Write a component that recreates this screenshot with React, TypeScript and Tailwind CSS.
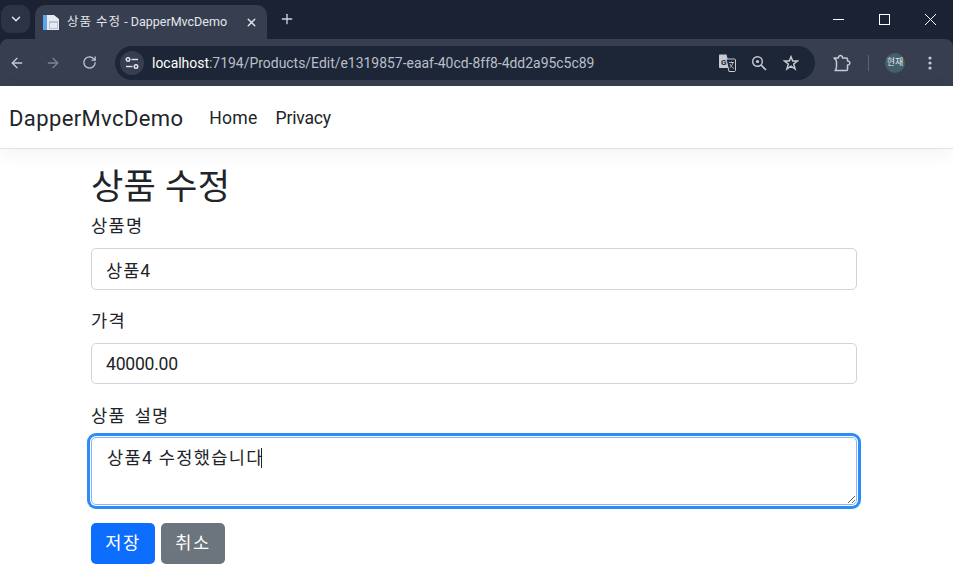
import React from 'react';
import { ArrowLeft, ArrowRight, RotateCw, ChevronDown, X, Plus } from 'lucide-react';

const font = { fontFamily: 'Roboto, "Noto Sans CJK KR", sans-serif' };

const Field = ({ label, value, className, inputClassName }: { label: string; value: string; className: string; inputClassName: string }) => (
  <div className={className}>
    <label className="block h-[26px] text-[17.6px] leading-[26px] tracking-[1.3px] text-[#212529] mb-[9px]">{label}</label>
    <input
      readOnly
      value={value}
      className={`block w-full px-[14px] text-[17.6px] text-[#212529] bg-white border border-[#ced4da] rounded-[5px] outline-none ${inputClassName}`}
    />
  </div>
);

const SiteInfoIcon = () => (
  <svg width="14" height="14" viewBox="0 0 14 14" fill="none" stroke="#e3e6ec" strokeWidth="1.4">
    <circle cx="3" cy="3.5" r="1.8" />
    <path d="M6.5 3.5H13" />
    <circle cx="11" cy="10.5" r="1.8" />
    <path d="M1 10.5H7.5" />
  </svg>
);

const TranslateIcon = () => (
  <svg width="18" height="18" viewBox="0 0 18 18">
    <path d="M1 1.5C1 .9 1.4.5 2 .5H8.5L12 14H2C1.4 14 1 13.6 1 13Z" fill="#c5cad3" />
    <path d="M8 5H16.5C17 5 17.5 5.4 17.5 6V16.5C17.5 17 17 17.5 16.5 17.5H11L8 5Z" fill="#1d2636" stroke="#c5cad3" strokeWidth="1" />
    <text x="3" y="11" fontSize="8" fontWeight="700" fill="#1d2636" fontFamily="Roboto, sans-serif">G</text>
    <path d="M11 8.5H16M13.5 7.5V8.5M15 8.5C14.5 11 13 13 11.5 14M12 10C12.5 11.5 14 13.5 16 14.5" stroke="#c5cad3" strokeWidth="0.9" fill="none" />
  </svg>
);

const ZoomIcon = () => (
  <svg width="16" height="16" viewBox="0 0 16 16" fill="none" stroke="#c5cad3" strokeWidth="1.4">
    <circle cx="6.5" cy="6.5" r="4.8" />
    <circle cx="6.5" cy="6.5" r="1.6" fill="#c5cad3" stroke="none" />
    <path d="M10 10L15 15" strokeWidth="1.7" />
  </svg>
);

const StarIcon = () => (
  <svg width="16" height="16" viewBox="0 0 16 16" fill="none" stroke="#c5cad3" strokeWidth="1.5" strokeLinejoin="miter">
    <path d="M8 1.8L9.7 6H14.6L10.7 9L12.1 14L8 11.2L3.9 14L5.3 9L1.4 6H6.3Z" />
  </svg>
);

const ExtensionIcon = () => (
  <svg width="18" height="18" viewBox="0 0 18 18" fill="none" stroke="#c5cad3" strokeWidth="1.5" strokeLinejoin="round">
    <path d="M1 4H5.5C5 .8 10 .8 9.5 4H13.5C14.1 4 14.5 4.4 14.5 5V7C17.6 6.6 17.6 11.4 14.5 11V15.5C14.5 16.1 14.1 16.5 13.5 16.5H2C3.2 15.6 3.5 14.5 3.5 13V7.5C3.5 6 2.6 5 1 4Z" />
  </svg>
);

const KebabIcon = () => (
  <svg width="4" height="14" viewBox="0 0 4 14" fill="#c5cad3">
    <circle cx="2" cy="2" r="1.6" />
    <circle cx="2" cy="7" r="1.6" />
    <circle cx="2" cy="12" r="1.6" />
  </svg>
);

const BrowserChrome = () => (
  <div className="bg-[#1a2233]">
    <div className="h-[39px] flex items-end relative">
      <div className="w-[29px] h-[28px] ml-[1px] mb-[6px] rounded-[9px] bg-[#2b3345] flex items-center justify-center text-[#e3e6ec]">
        <ChevronDown size={14} strokeWidth={2.5} />
      </div>
      <div className="ml-[5px] w-[232px] h-[34px] bg-[#363e4f] rounded-t-[10px] flex items-center pl-[8px] pr-[9px] text-[#e3e6ec]">
        <svg width="16" height="16" viewBox="0 0 16 16" className="shrink-0">
          <path d="M0 1H11L16 5V16H0Z" fill="#e8ecf2" />
          <rect x="0" y="1" width="4" height="15" fill="#5aa5e6" />
          <rect x="6" y="7" width="9" height="8" fill="#b9c4d2" />
          <rect x="7" y="9" width="7" height="5" fill="#e8ecf2" />
        </svg>
        <span className="ml-[8px] text-[12.5px] leading-[16px] whitespace-nowrap flex-1">
          <span className="tracking-[1px]">상품 수정</span> - DapperMvcDemo
        </span>
        <X size={13} strokeWidth={2.5} />
      </div>
      <div className="ml-[6px] mb-[6px] w-[28px] h-[28px] flex items-center justify-center text-[#cfd3da]">
        <Plus size={16} strokeWidth={2} />
      </div>
      <div className="ml-auto h-[39px] self-start flex text-white">
        <div className="w-[46px] h-[38px] flex items-center justify-center">
          <svg width="11" height="11" viewBox="0 0 11 11" stroke="#fff" shapeRendering="crispEdges"><path d="M0 5.5H11" /></svg>
        </div>
        <div className="w-[46px] h-[38px] flex items-center justify-center">
          <svg width="11" height="11" viewBox="0 0 11 11" fill="none" stroke="#fff" shapeRendering="crispEdges"><rect x="0.5" y="0.5" width="10" height="10" /></svg>
        </div>
        <div className="w-[46px] h-[38px] flex items-center justify-center">
          <svg width="11" height="11" viewBox="0 0 11 11" stroke="#fff" strokeWidth="1"><path d="M0 0L11 11M11 0L0 11" /></svg>
        </div>
      </div>
    </div>
    <div className="h-[47px] bg-[#363e4f] rounded-t-[8px] flex items-center text-[#c5cad3]">
      <ArrowLeft size={16} strokeWidth={2} className="ml-[9px]" />
      <ArrowRight size={16} strokeWidth={2} className="ml-[20px] text-[#7d8492]" />
      <RotateCw size={15} strokeWidth={2} className="ml-[21px]" />
      <div className="ml-[18px] w-[700px] h-[34px] rounded-full bg-[#1d2636] flex items-center">
        <div className="ml-[5px] w-[24px] h-[24px] rounded-full bg-[#363e4f] flex items-center justify-center">
          <SiteInfoIcon />
        </div>
        <span className="ml-[8px] text-[13.95px] leading-[18px] whitespace-nowrap text-[#b9bfca]">
          <span className="text-white">localhost</span>:7194/Products/Edit/e1319857-eaaf-40cd-8ff8-4dd2a95c5c89
        </span>
        <div className="ml-auto flex items-center">
          <TranslateIcon />
          <div className="ml-[15px] flex"><ZoomIcon /></div>
          <div className="ml-[16px] mr-[16px] flex"><StarIcon /></div>
        </div>
      </div>
      <div className="ml-[18px] flex"><ExtensionIcon /></div>
      <div className="ml-[17px] w-[1px] h-[16px] bg-[#5a6170]" />
      <div className="ml-[16px] w-[20px] h-[20px] rounded-full bg-[#44606a] flex items-center justify-center text-[9px] text-[#e3e6ec]">현재</div>
      <div className="ml-[23px] flex"><KebabIcon /></div>
    </div>
  </div>
);

export default function App() {
  return (
    <div className="w-[953px] h-[586px] overflow-hidden bg-white" style={font}>
      <BrowserChrome />
      <nav className="h-[63px] pt-[3px] bg-white border-b border-[#dee2e6] shadow-[0_4px_20px_rgba(0,0,0,0.05)] flex items-center">
        <span className="ml-[9px] text-[22px] tracking-[0.38px] text-[#212529] leading-[30px]">DapperMvcDemo</span>
        <span className="ml-[26px] text-[17.6px] tracking-[0.2px] text-[#212529]">Home</span>
        <span className="ml-[18px] text-[17.6px] tracking-[-0.2px] text-[#212529]">Privacy</span>
      </nav>
      <main className="w-[766px] ml-[91px]">
        <h1 className="mt-[17px] h-[40px] text-[35.2px] leading-[42px] tracking-[0.2px] text-[#212529]">상품 수정</h1>
        <Field label="상품명" value="상품4" className="mt-[7px]" inputClassName="h-[42px] tracking-[1px]" />
        <Field label="가격" value="40000.00" className="mt-[18px]" inputClassName="h-[41px] tracking-[-0.25px]" />
        <div className="mt-[19px]">
          <label className="block h-[26px] text-[17.6px] leading-[26px] tracking-[1.3px] [word-spacing:3px] text-[#212529] mb-[8px]">상품 설명</label>
          <div className="relative">
            <textarea
              readOnly
              value="상품4 수정했습니다"
              className="block w-full h-[68px] px-[15px] py-[7px] text-[17.6px] leading-[26px] tracking-[1.3px] text-[#212529] bg-white border border-[#86b7fe] rounded-[5px] outline-none shadow-[0_0_0_1px_#fff,0_0_0_4px_#2d8cf5]"
            />
            <div className="absolute left-[170px] top-[11px] w-[1px] h-[20px] bg-[#212529]" />
          </div>
        </div>
        <div className="mt-[18px] flex gap-[6px]">
          <button className="w-[64px] h-[41px] rounded-[5px] bg-[#0d6efd] text-white text-[17.6px] tracking-[1.6px]">저장</button>
          <button className="w-[64px] h-[41px] rounded-[5px] bg-[#6c757d] text-white text-[17.6px] tracking-[1.6px]">취소</button>
        </div>
      </main>
    </div>
  );
}
